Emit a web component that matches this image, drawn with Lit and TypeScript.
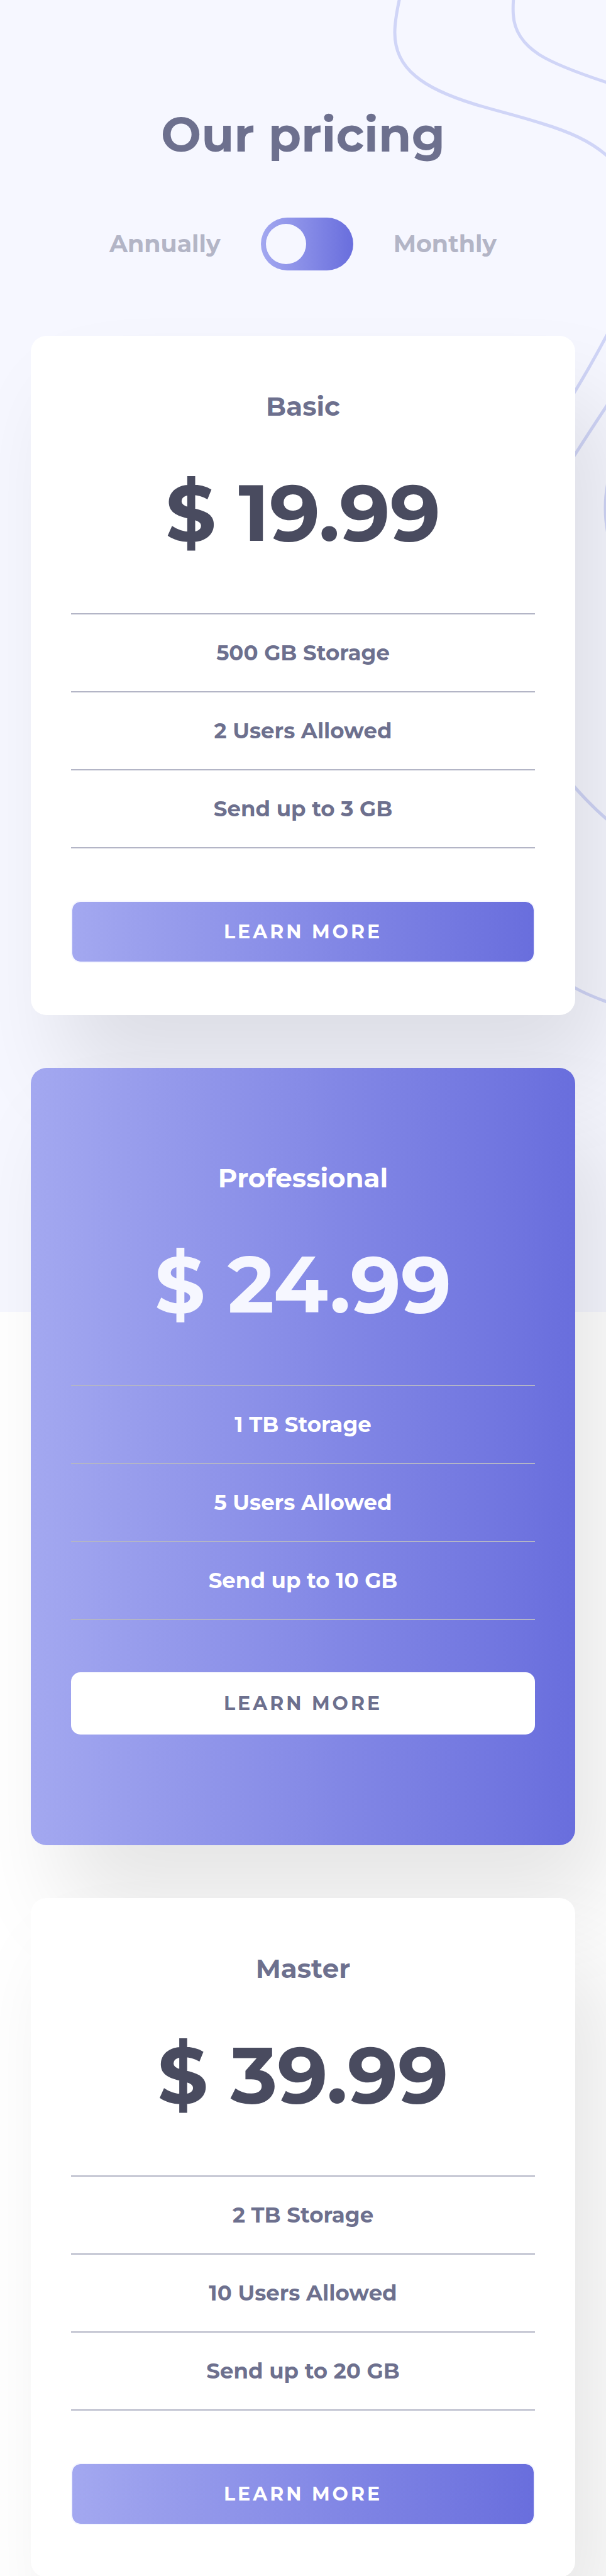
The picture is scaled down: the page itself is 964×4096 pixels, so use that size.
import { LitElement, html, css } from "lit";
import { customElement, property, state } from "lit/decorators.js";
import { classMap } from "lit/directives/class-map.js";

interface Plan {
  name: string;
  monthly: string;
  features: string[];
  featured?: boolean;
}

const PLANS: Plan[] = [
  { name: "Basic", monthly: "19.99", features: ["500 GB Storage", "2 Users Allowed", "Send up to 3 GB"] },
  {
    name: "Professional",
    monthly: "24.99",
    features: ["1 TB Storage", "5 Users Allowed", "Send up to 10 GB"],
    featured: true,
  },
  { name: "Master", monthly: "39.99", features: ["2 TB Storage", "10 Users Allowed", "Send up to 20 GB"] },
];

@customElement("pricing-card")
export class PricingCard extends LitElement {
  static styles = css`
    :host {
      display: block;
    }
    .card {
      box-sizing: border-box;
      padding: 87px 64px 83px;
      border-radius: 25px;
      background: #fff;
      box-shadow: 50px 99px 148px rgba(0, 0, 0, 0.1);
      color: #6d708e;
      text-align: center;
      font-weight: 700;
    }
    .featured {
      padding-top: 150px;
      padding-bottom: 176px;
      background: linear-gradient(to right, #a3a8f0, #696edd);
      color: #fff;
    }
    .name {
      margin: 0;
      font-size: 42px;
      line-height: 50px;
    }
    .price {
      margin: 70px 0 0;
      font-size: 126px;
      line-height: 148px;
      color: #494b5f;
    }
    .featured .price {
      color: #f6f7ff;
    }
    .features {
      margin: 86px 0 83px;
      padding: 0;
      list-style: none;
      border-bottom: 2px solid #b3b5c6;
    }
    .feature {
      border-top: 2px solid #b3b5c6;
      font-size: 34px;
      line-height: 122px;
    }
    .more {
      display: block;
      box-sizing: border-box;
      width: 100%;
      height: 99px;
      padding: 0;
      border: 2px solid #f6f7ff;
      border-radius: 15px;
      background: linear-gradient(to right, #a3a8f0, #696edd) padding-box;
      color: #fff;
      font: inherit;
      font-size: 30px;
      letter-spacing: 4px;
      text-transform: uppercase;
      cursor: pointer;
    }
    .featured .more {
      border-color: #fff;
      background: #fff;
      color: #6d708e;
    }
  `;

  @property({ attribute: false }) plan!: Plan;

  render() {
    const { name, monthly, features, featured } = this.plan;
    return html`
      <article class=${classMap({ card: true, featured: !!featured })}>
        <h2 class="name">${name}</h2>
        <p class="price">$ ${monthly}</p>
        <ul class="features">
          ${features.map((f) => html`<li class="feature">${f}</li>`)}
        </ul>
        <button class="more" type="button">Learn more</button>
      </article>
    `;
  }
}

@customElement("app-root")
export class AppRoot extends LitElement {
  static styles = css`
    :host {
      display: block;
      font-family: Montserrat, Inter, "Open Sans", sans-serif;
    }
    .page {
      position: relative;
      overflow: hidden;
      padding: 169px 49px 0;
      background: linear-gradient(#f6f7ff 2086px, #fff 2086px);
    }
    .curves {
      position: absolute;
      top: 0;
      right: 0;
      width: 400px;
      height: 1700px;
    }
    .content {
      position: relative;
    }
    .title {
      margin: 0;
      font-size: 76px;
      line-height: 90px;
      font-weight: 700;
      text-align: center;
      color: #6d708e;
    }
    .billing {
      display: flex;
      align-items: center;
      justify-content: center;
      gap: 64px;
      margin: 87px 0 104px;
      font-size: 38px;
      line-height: 46px;
      font-weight: 700;
      color: #b3b5c6;
    }
    .toggle {
      appearance: none;
      box-sizing: border-box;
      width: 147px;
      height: 84px;
      margin: 0;
      padding: 10px 8px;
      border-radius: 42px;
      background: linear-gradient(to right, #a3a8f0, #696edd);
      display: flex;
      cursor: pointer;
    }
    .toggle::before {
      content: "";
      width: 64px;
      height: 64px;
      border-radius: 50%;
      background: #f6f7ff;
    }
    .toggle:checked {
      justify-content: flex-end;
    }
    .plans {
      display: grid;
      gap: 84px;
    }
  `;

  @state() private switched = false;

  render() {
    return html`
      <main class="page">
        <svg class="curves" viewBox="0 0 400 1700" fill="none" stroke="#d0d5f7" stroke-width="5" aria-hidden="true">
          <path
            d="M72 -4C68 14 64 34 64 52C64 80 75 103 97 121C118 139 153 154 192 166C229 177 262 185 297 196C340 209 375 224 402 248"
          />
          <path d="M253 -4C252 8 252 16 252.5 23C254 50 268 70 294 87C318 102 355 116 404 132" />
          <path d="M404 528C386 562 370 591 346 630" />
          <path d="M404 641C384 671 369 694 346 730" />
          <path d="M346 1247C360 1263 378 1283 404 1305" />
          <path d="M346 1568C362 1578 382 1586 404 1594" />
          <circle cx="604" cy="808" r="205" />
        </svg>
        <div class="content">
          <h1 class="title">Our pricing</h1>
          <div class="billing">
            <label for="period">Annually</label>
            <input
              class="toggle"
              id="period"
              type="checkbox"
              role="switch"
              .checked=${this.switched}
              @change=${(e: Event) => (this.switched = (e.target as HTMLInputElement).checked)}
            />
            <label for="period">Monthly</label>
          </div>
          <div class="plans">${PLANS.map((p) => html`<pricing-card .plan=${p}></pricing-card>`)}</div>
        </div>
      </main>
    `;
  }
}
